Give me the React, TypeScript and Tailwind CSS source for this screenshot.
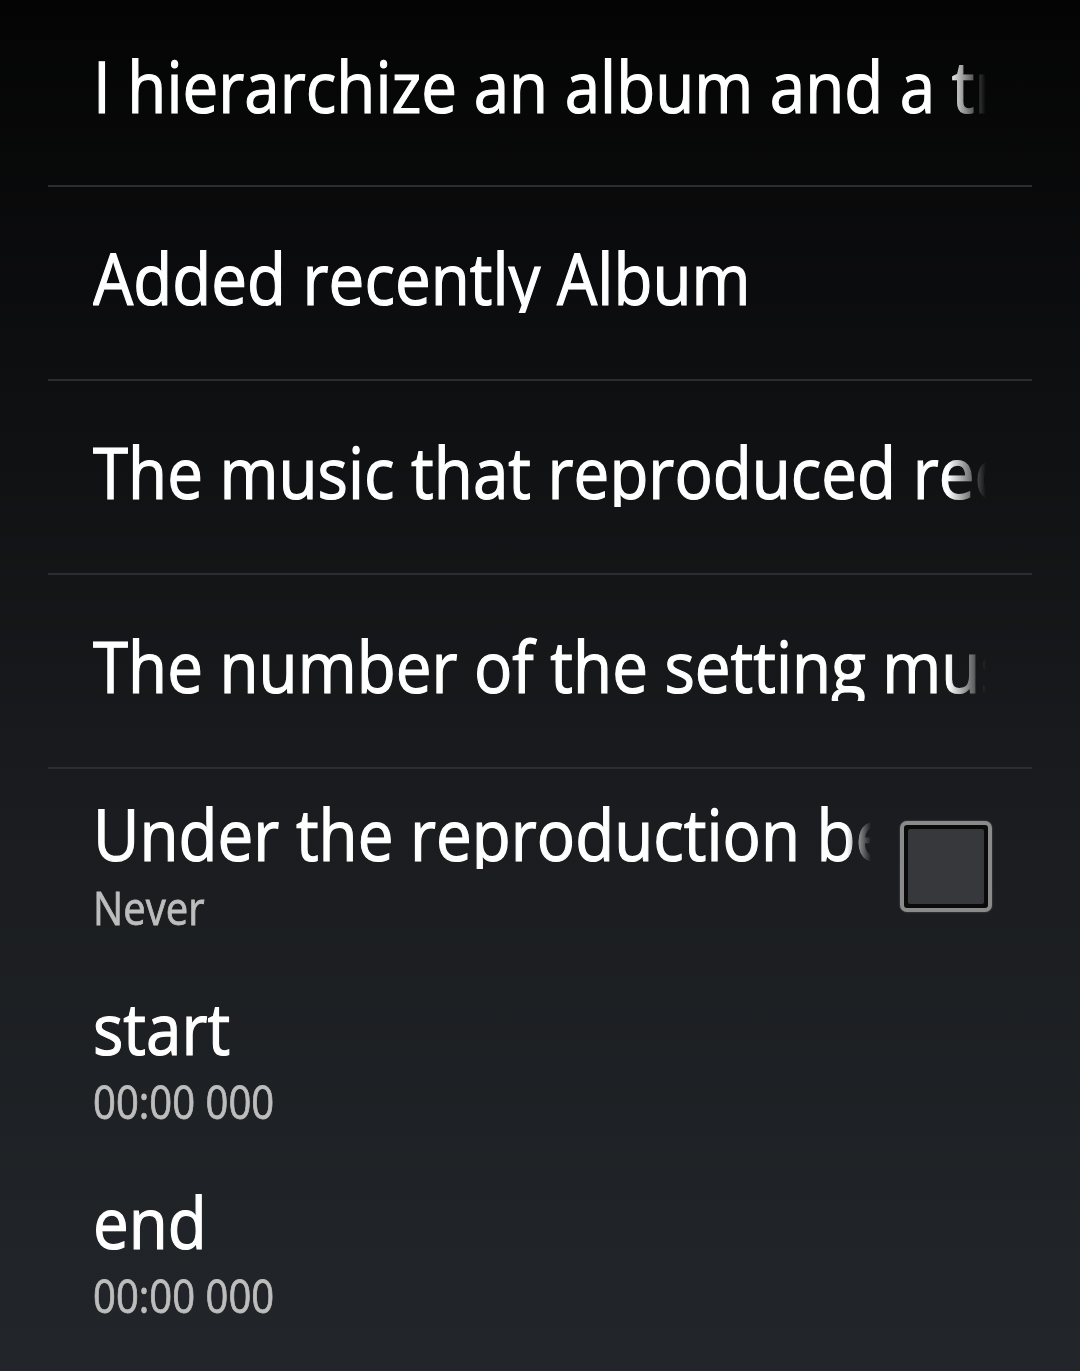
import React from "react";

const FADE_LONG =
  "overflow-hidden whitespace-nowrap [mask-image:linear-gradient(to_right,black_calc(100%_-_38px),transparent)]";
const FADE_SHORT =
  "overflow-hidden whitespace-nowrap [mask-image:linear-gradient(to_right,black_calc(100%_-_24px),transparent)]";

function Title({ text }: { text: string }) {
  return (
    <span className="inline-block origin-left scale-x-[0.885] whitespace-nowrap text-[72px] leading-none text-white [-webkit-text-stroke:1.2px_#ffffff]">
      {text}
    </span>
  );
}

function Divider() {
  return <div className="mx-[48px] h-[2px] bg-[#2b2d30]" />;
}

function SingleRow({ text, first }: { text: string; first?: boolean }) {
  return (
    <div className={first ? "h-[185px] pl-[93px] pr-[94px] pt-[49px]" : "h-[192px] pl-[93px] pr-[94px] pt-[54px]"}>
      <div className={FADE_LONG}>
        <Title text={text} />
      </div>
    </div>
  );
}

function Sub({ text }: { text: string }) {
  return (
    <div className="mt-[16px] whitespace-nowrap">
      <span className="inline-block origin-left scale-x-[0.89] text-[45px] leading-none text-[#bdbdbd] [-webkit-text-stroke:0.8px_#bdbdbd]">
        {text}
      </span>
    </div>
  );
}

function Checkbox() {
  return (
    <div className="mt-[52px] ml-[29px] h-[91px] w-[92px] shrink-0 rounded-[7px] border-[4px] border-[#8a8a8a] bg-[#0a0a0b] p-[4px] shadow-[0_0_2px_rgba(160,160,160,0.5)]">
      <div className="h-full w-full rounded-[2px] bg-[#36383c]" />
    </div>
  );
}

export default function App() {
  return (
    <div
      className="min-h-[1371px] w-[1080px] bg-[linear-gradient(to_bottom,#040404,#0e0f11_28%,#1a1c1f_60%,#22262a)]"
      style={{ fontFamily: '"Open Sans", "Noto Sans", sans-serif' }}
    >
      <SingleRow first text="I hierarchize an album and a track" />
      <Divider />
      <SingleRow text="Added recently Album" />
      <Divider />
      <SingleRow text="The music that reproduced recently" />
      <Divider />
      <SingleRow text="The number of the setting music" />
      <Divider />

      <div className="flex h-[194px] items-start pl-[93px] pr-[88px]">
        <div className="min-w-0 flex-1 pt-[28px]">
          <div className={FADE_SHORT}>
            <Title text="Under the reproduction before" />
          </div>
          <Sub text="Never" />
        </div>
        <Checkbox />
      </div>

      <div className="h-[194px] pl-[93px] pr-[88px] pt-[28px]">
        <div className="whitespace-nowrap">
          <Title text="start" />
        </div>
        <Sub text="00:00 000" />
      </div>

      <div className="h-[194px] pl-[93px] pr-[88px] pt-[28px]">
        <div className="whitespace-nowrap">
          <Title text="end" />
        </div>
        <Sub text="00:00 000" />
      </div>
    </div>
  );
}
